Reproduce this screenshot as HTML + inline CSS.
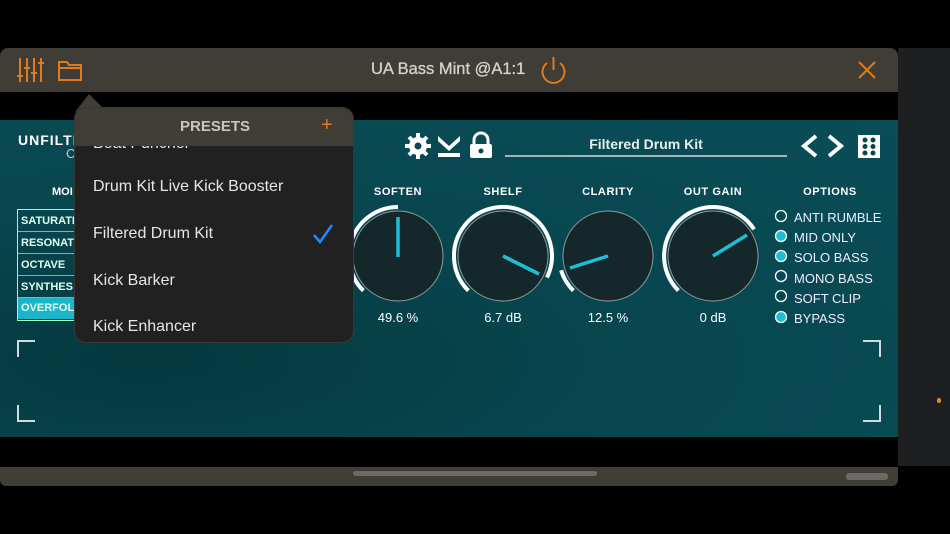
<!DOCTYPE html>
<html><head><meta charset="utf-8"><style>
*{margin:0;padding:0;box-sizing:border-box}
body{width:950px;height:534px;background:#000;position:relative;overflow:hidden;font-family:"Liberation Sans",sans-serif;color:#fff}
.abs{position:absolute}
.t{position:absolute;white-space:nowrap}
</style></head><body>
<div class="abs" style="left:898px;top:48px;width:52px;height:418px;background:#1d1f21"></div>
<div class="abs" style="left:937px;top:398px;width:4px;height:5px;background:#e08a1a;border-radius:2px"></div>
<div class="abs" style="left:0;top:48px;width:898px;height:44px;background:#403c36;border-radius:8px 8px 0 0"></div>
<svg class="abs" style="left:0;top:48px" width="898" height="44">
 <g stroke="#e07a1e" stroke-width="2" fill="none">
  <line x1="20" y1="10" x2="20" y2="34"/><line x1="17" y1="28" x2="23" y2="28"/>
  <line x1="27" y1="10" x2="27" y2="34"/><line x1="24" y1="20" x2="30" y2="20"/>
  <line x1="34" y1="10" x2="34" y2="34"/><line x1="31" y1="25" x2="37" y2="25"/>
  <line x1="41" y1="10" x2="41" y2="34"/><line x1="38" y1="15" x2="44" y2="15"/>
  <path d="M59 14h8l2 3h12v15h-22z M59 20h22"/>
  <path d="M547 15a11 11 0 1 0 13 0" /><line x1="553.5" y1="9" x2="553.5" y2="22"/>
  <line x1="859" y1="14" x2="875" y2="30"/><line x1="875" y1="14" x2="859" y2="30"/>
 </g>
</svg>
<div class="t" style="left:371px;top:60px;font-size:16.5px;color:#d4d2ce;-webkit-text-stroke:0.3px #d4d2ce">UA Bass Mint @A1:1</div>
<div class="abs" style="left:0;top:120px;width:898px;height:317px;background:radial-gradient(ellipse at 150px 240px,#04393f 0%,#08464f 45%,#0a4d57 100%)"></div>
<div class="t" style="left:18px;top:132px;font-size:14px;font-weight:bold;letter-spacing:1px">UNFILTE</div>
<div class="t" style="left:66px;top:146px;font-size:13px;color:#bcd">C</div>
<div class="t" style="left:52px;top:186px;font-size:11px;font-weight:bold">MOI</div>
<div class="abs" style="left:17px;top:209px;width:60px;height:112px;border:1px solid #9fb"></div>
<div class="abs" style="left:18px;top:210px;width:58px;font-size:11px;font-weight:bold;color:#dfe">
 <div style="height:22px;line-height:22px;padding-left:3px;border-bottom:1px solid #8ab">SATURATI</div>
 <div style="height:22px;line-height:22px;padding-left:3px;border-bottom:1px solid #8ab">RESONAT</div>
 <div style="height:22px;line-height:22px;padding-left:3px;border-bottom:1px solid #8ab">OCTAVE</div>
 <div style="height:22px;line-height:22px;padding-left:3px;border-bottom:1px solid #8ab">SYNTHES</div>
 <div style="height:21px;line-height:21px;padding-left:3px;background:#1cb4c8">OVERFOL</div>
</div>
<svg class="abs" style="left:400px;top:128px" width="500" height="36">
 <g fill="#fff">
  <circle cx="18" cy="18" r="9"/>
  <g stroke="#fff" stroke-width="4"><line x1="18" y1="5" x2="18" y2="31"/><line x1="5" y1="18" x2="31" y2="18"/><line x1="9" y1="9" x2="27" y2="27"/><line x1="27" y1="9" x2="9" y2="27"/></g>
  <circle cx="18" cy="18" r="3.5" fill="#08464f"/>
  <path d="M38 8l11 10l11-10v5l-11 10l-11-10z"/><rect x="38" y="25" width="22" height="4"/>
  <path d="M74 16v-4a7 7 0 0 1 14 0v4" fill="none" stroke="#fff" stroke-width="3"/>
  <rect x="70" y="16" width="22" height="14" rx="2"/><circle cx="81" cy="23" r="2.5" fill="#08464f"/>
  <path d="M416 8l-12 10l12 10" fill="none" stroke="#fff" stroke-width="4"/>
  <path d="M429 8l12 10l-12 10" fill="none" stroke="#fff" stroke-width="4"/>
  <rect x="458" y="7" width="22" height="23"/>
 </g>
 <g fill="#08464f"><circle cx="465" cy="12" r="2.5"/><circle cx="473" cy="12" r="2.5"/><circle cx="465" cy="18.5" r="2.5"/><circle cx="473" cy="18.5" r="2.5"/><circle cx="465" cy="25" r="2.5"/><circle cx="473" cy="25" r="2.5"/></g>
 <line x1="105" y1="28" x2="387" y2="28" stroke="#cfd8da" stroke-width="1.5"/>
</svg>
<div class="t" style="left:505px;width:282px;text-align:center;top:136px;font-size:14px;font-weight:bold;color:#e8eeee">Filtered Drum Kit</div>
<div class="abs" style="left:348px;top:186px;font-size:11px;font-weight:bold;letter-spacing:.6px">
 <span class="t" style="left:0;width:100px;text-align:center">SOFTEN</span>
 <span class="t" style="left:105px;width:100px;text-align:center">SHELF</span>
 <span class="t" style="left:210px;width:100px;text-align:center">CLARITY</span>
 <span class="t" style="left:315px;width:100px;text-align:center">OUT GAIN</span>
 <span class="t" style="left:432px;width:100px;text-align:center">OPTIONS</span>
</div>
<div class="abs" style="left:348px;top:310px;font-size:13px">
 <span class="t" style="left:0;width:100px;text-align:center">49.6 %</span>
 <span class="t" style="left:105px;width:100px;text-align:center">6.7 dB</span>
 <span class="t" style="left:210px;width:100px;text-align:center">12.5 %</span>
 <span class="t" style="left:315px;width:100px;text-align:center">0 dB</span>
</div>
<svg class="abs" style="left:0;top:0" width="950" height="534">
 <g fill="#14272b" stroke="#8a9a9c" stroke-width="1">
  <circle cx="398" cy="256" r="45"/><circle cx="503" cy="256" r="45"/><circle cx="608" cy="256" r="45"/><circle cx="713" cy="256" r="45"/>
 </g>
 <g fill="none" stroke="#fff" stroke-width="4">
  <path d="M363.35 290.65 A49 49 0 0 1 398 207"/>
  <path d="M468.35 290.65 A49 49 0 1 1 547 277.5"/>
  <path d="M573.35 290.65 A49 49 0 0 1 561.1 270.3"/>
  <path d="M678.35 290.65 A49 49 0 1 1 754.1 229.3"/>
 </g>
 <g stroke="#1cbfd6" stroke-width="3.5">
  <line x1="398" y1="257" x2="398" y2="217"/>
  <line x1="503" y1="256" x2="539" y2="274"/>
  <line x1="608" y1="256" x2="570" y2="268"/>
  <line x1="713" y1="256" x2="747" y2="235"/>
 </g>
 <g stroke="#fff" stroke-width="1.3">
  <circle cx="781" cy="216" r="5.5" fill="none"/>
  <circle cx="781" cy="236" r="5.5" fill="#1cbfd6"/>
  <circle cx="781" cy="256" r="5.5" fill="#1cbfd6"/>
  <circle cx="781" cy="276" r="5.5" fill="none"/>
  <circle cx="781" cy="296" r="5.5" fill="none"/>
  <circle cx="781" cy="317" r="5.5" fill="#1cbfd6"/>
 </g>
 <g fill="none" stroke="#cfdcdf" stroke-width="2">
  <path d="M35 341H18V357"/><path d="M18 405V421H35"/>
  <path d="M863 341H880V357"/><path d="M880 405V421H863"/>
 </g>
</svg>
<div class="abs" style="left:794px;top:208px;font-size:13px;line-height:20.2px;color:#eef">
 <div>ANTI RUMBLE</div><div>MID ONLY</div><div>SOLO BASS</div><div>MONO BASS</div><div>SOFT CLIP</div><div>BYPASS</div>
</div>
<div class="abs" style="left:0;top:467px;width:898px;height:19px;background:#403c36;border-radius:0 0 6px 6px"></div>
<div class="abs" style="left:353px;top:471px;width:244px;height:5px;background:#6d6a66;border-radius:3px"></div>
<div class="abs" style="left:846px;top:473px;width:42px;height:7px;background:#6d6a66;border-radius:3px"></div>
<svg class="abs" style="left:75px;top:92px" width="40" height="20"><path d="M0 20L14 2L30 18z" fill="#403c36"/></svg>
<div class="abs" style="left:74px;top:107px;width:280px;height:236px;background:#212121;border:1px solid #3a3834;border-radius:12px;overflow:hidden">
 <div class="t" style="left:18px;top:27px;font-size:16px;color:#e6e6e6">Beat Puncher</div>
 <div class="abs" style="left:0;top:0;width:280px;height:38px;background:#403c36"></div>
 <div class="t" style="left:0;width:280px;text-align:center;top:10px;font-size:15px;font-weight:bold;color:#c8c6c2">PRESETS</div>
 <div class="t" style="left:246px;top:6px;font-size:20px;color:#e07a1e">+</div>
 <div class="t" style="left:18px;top:70px;font-size:16px;color:#e6e6e6">Drum Kit Live Kick Booster</div>
 <div class="t" style="left:18px;top:117px;font-size:16px;color:#e6e6e6">Filtered Drum Kit</div>
 <svg class="abs" style="left:236px;top:115px" width="24" height="22"><path d="M3 12l6 7L21 2" fill="none" stroke="#1e8cff" stroke-width="2.5"/></svg>
 <div class="t" style="left:18px;top:164px;font-size:16px;color:#e6e6e6">Kick Barker</div>
 <div class="t" style="left:18px;top:210px;font-size:16px;color:#e6e6e6">Kick Enhancer</div>
</div>
</body></html>
